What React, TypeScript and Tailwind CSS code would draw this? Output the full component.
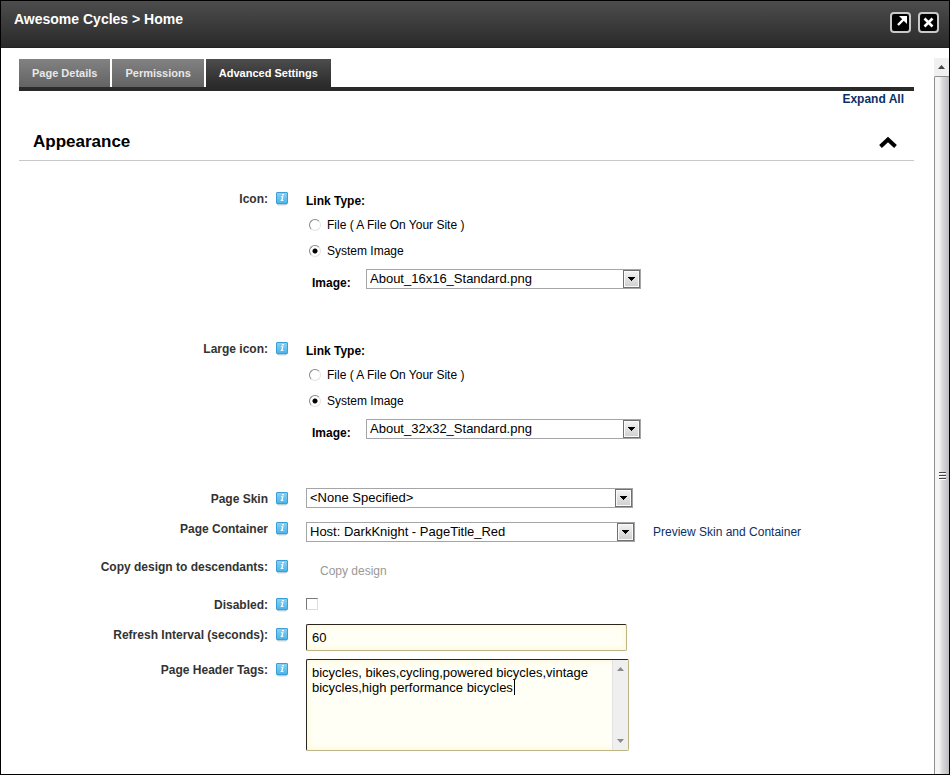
import { useState, type ReactNode, type SelectHTMLAttributes } from 'react';

function InfoIcon() {
  return (
    <svg width="12" height="14" viewBox="0 0 12 14" className="mt-1 block" aria-hidden="true">
      <defs>
        <linearGradient id="info-fill" x1="0" y1="0" x2="0" y2="1">
          <stop offset="0" stopColor="#8ad3f3" />
          <stop offset="1" stopColor="#49b4ea" />
        </linearGradient>
      </defs>
      <rect x="1" y="12" width="10" height="1" fill="#b9cdd8" />
      <rect x="2" y="13" width="8" height="1" fill="#e6edf1" />
      <rect x="0.5" y="0.5" width="11" height="11" rx="0.5" fill="url(#info-fill)" stroke="#3b9fd6" />
      <rect x="6" y="2" width="2" height="1.300" fill="#fff" />
      <path d="M5 4.300h2.500L6.600 8.300h.9v.8H4.500v-.8h.7L6 5.100H5z" fill="#fff" />
    </svg>
  );
}

function Row({
  label,
  htmlFor,
  className,
  contentClass = '',
  children,
}: {
  label: string;
  htmlFor?: string;
  className: string;
  contentClass?: string;
  children: ReactNode;
}) {
  return (
    <div className={`flex items-start ${className}`}>
      <label htmlFor={htmlFor} className="w-[249px] shrink-0 pt-[3px] text-right text-xs leading-4 font-bold text-[#333]">
        {label}
      </label>
      <div className="ml-2 w-[30px] shrink-0">
        <InfoIcon />
      </div>
      <div className={`min-w-0 flex-1 ${contentClass}`}>{children}</div>
    </div>
  );
}

function DropDown({ width, options, ...rest }: { width: string; options: string[] } & SelectHTMLAttributes<HTMLSelectElement>) {
  return (
    <div className={`relative h-5 ${width}`}>
      <select
        {...rest}
        className="block h-5 w-full appearance-none border border-[#a5a5a9] bg-white pr-5 pl-[3px] text-[13px] leading-[18px] text-black outline-none"
      >
        {options.map((o) => (
          <option key={o}>{o}</option>
        ))}
      </select>
      <span className="pointer-events-none absolute top-px right-px flex h-[18px] w-[17px] items-center justify-center border border-[#707070] bg-linear-to-b from-[#f3f3f3] to-[#cfcfcf] shadow-[inset_0_0_0_1px_#fafafa]">
        <svg width="7" height="4" viewBox="0 0 7 4" aria-hidden="true" shapeRendering="crispEdges">
          <path d="M0 0h7v1H6v1H5v1H4v1H3V3H2V2H1V1H0z" fill="#000" />
        </svg>
      </span>
    </div>
  );
}

function LinkPicker({ id, images }: { id: string; images: string[] }) {
  const [type, setType] = useState('system');
  const choices = [
    { value: 'file', text: 'File ( A File On Your Site )' },
    { value: 'system', text: 'System Image' },
  ];
  return (
    <fieldset className="text-xs text-black">
      <legend className="h-[21px] leading-5 font-bold">Link Type:</legend>
      {choices.map((c) => (
        <label key={c.value} className="flex h-[26px] items-center gap-[6px] pl-[3px]">
          <input
            type="radio"
            name={id}
            value={c.value}
            checked={type === c.value}
            onChange={() => setType(c.value)}
            className="size-3 shrink-0 appearance-none rounded-full border border-t-[#888] border-r-[#e4e4e4] border-b-[#e4e4e4] border-l-[#888] bg-white checked:bg-[radial-gradient(circle,#000_2px,transparent_3px)]"
          />
          {c.text}
        </label>
      ))}
      <div className="mt-[5px] flex pl-[6px]">
        <label htmlFor={`${id}-image`} className="w-[54px] pt-[6px] leading-4 font-bold">
          Image:
        </label>
        <DropDown id={`${id}-image`} width="w-[275px]" options={images} />
      </div>
    </fieldset>
  );
}

const headerButton =
  'flex size-[21px] items-center justify-center rounded-[4px] border-2 border-[#c9c9c9] bg-black';

const tabs = ['Page Details', 'Permissions', 'Advanced Settings'];

const field =
  'block w-full resize-none rounded-[2px] border border-t-[#2b2620] border-r-[#bdb583] border-b-[#bdb583] border-l-[#2b2620] bg-[#fffff5] px-[5px] text-black shadow-[inset_0_0_7px_#fbf3d0] outline-none';

export default function App() {
  const [active, setActive] = useState(2);
  const [interval, setIntervalValue] = useState('60');
  const [tags, setTags] = useState(
    'bicycles, bikes,cycling,powered bicycles,vintage bicycles,high performance bicycles',
  );

  return (
    <div className="flex min-h-screen flex-col border border-black bg-white font-['Liberation_Sans',Arial,sans-serif]">
      <header className="flex h-[47px] items-start justify-between border-b border-[#222] bg-linear-to-b from-[#4d4d4d] to-[#2a2a2a] pr-[10px] pl-[13px]">
        <h1 className="pt-2 text-sm leading-5 font-bold text-white">Awesome Cycles &gt; Home</h1>
        <div className="flex gap-[7px] pt-[11px]">
          <button type="button" aria-label="Open in full window" className={headerButton}>
            <svg width="17" height="17" viewBox="0 0 17 17" aria-hidden="true" className="shrink-0">
              <path d="M7 2h8v8l-2.800-2.800z" fill="#fff" />
              <path d="M12 5l-6 6" stroke="#fff" strokeWidth="2.400" />
            </svg>
          </button>
          <button type="button" aria-label="Close" className={headerButton}>
            <svg width="17" height="17" viewBox="0 0 17 17" fill="none" stroke="#fff" strokeWidth="2.600" aria-hidden="true" className="shrink-0">
              <path d="M4.500 4.500l8 8M12.500 4.500l-8 8" />
            </svg>
          </button>
        </div>
      </header>

      <div className="flex flex-1">
        <main className="min-w-0 flex-1 pt-[11px] pr-5 pl-[18px]">
          <nav className="flex gap-[2px] border-b-4 border-[#2a2a2a]">
            {tabs.map((t, i) => (
              <button
                key={t}
                type="button"
                onClick={() => setActive(i)}
                className={`h-7 px-[13px] text-[11px] font-bold ${
                  i === active
                    ? 'bg-linear-to-b from-[#4d4d4d] to-[#2a2a2a] text-white'
                    : 'bg-linear-to-b from-[#828282] to-[#636363] text-[#e8e8e8]'
                }`}
              >
                {t}
              </button>
            ))}
          </nav>

          <div className="flex justify-end pr-[10px]">
            <a href="#expand" className="text-xs leading-4 font-bold text-[#0d2f66]">
              Expand All
            </a>
          </div>

          <div className="mt-4 flex h-[38px] items-center justify-between border-b border-[#c8c8c8] pr-[17px] pl-[14px]">
            <h2 className="text-[17px] leading-6 font-bold text-black">Appearance</h2>
            <button type="button" aria-label="Collapse Appearance">
              <svg width="18" height="12" viewBox="0 0 18 12" fill="none" stroke="#000" strokeWidth="4" aria-hidden="true">
                <path d="M1.500 10.500L9 3.500l7.500 7" />
              </svg>
            </button>
          </div>

          <form className="pt-[27px]" onSubmit={(e) => e.preventDefault()}>
            <Row label="Icon:" htmlFor="icon-image" className="min-h-[150px]" contentClass="pt-[3px]">
              <LinkPicker id="icon" images={['About_16x16_Standard.png']} />
            </Row>
            <Row label="Large icon:" htmlFor="large-icon-image" className="min-h-[150px]" contentClass="pt-[3px]">
              <LinkPicker id="large-icon" images={['About_32x32_Standard.png']} />
            </Row>
            <Row label="Page Skin" htmlFor="skin" className="min-h-[30px]">
              <DropDown id="skin" width="w-[327px]" options={['<None Specified>']} />
            </Row>
            <Row label="Page Container" htmlFor="container" className="min-h-[38px]" contentClass="flex items-center gap-[18px] pt-1">
              <DropDown id="container" width="w-[329px]" options={['Host: DarkKnight - PageTitle_Red']} />
              <a href="#preview" className="text-xs leading-4 text-[#0d2f66]">
                Preview Skin and Container
              </a>
            </Row>
            <Row label="Copy design to descendants:" htmlFor="copy" className="min-h-[38px]" contentClass="pt-[7px]">
              <button id="copy" type="button" disabled className="block pl-[14px] text-xs leading-4 text-[#999]">
                Copy design
              </button>
            </Row>
            <Row label="Disabled:" htmlFor="disabled" className="min-h-[30px]" contentClass="pt-1">
              <input
                id="disabled"
                type="checkbox"
                className="block size-3 appearance-none border border-t-[#777] border-r-[#ddd] border-b-[#ddd] border-l-[#777] bg-white checked:bg-[#555]"
              />
            </Row>
            <Row label="Refresh Interval (seconds):" htmlFor="refresh" className="min-h-[35px]">
              <div className="w-[321px]">
                <input
                  id="refresh"
                  type="text"
                  value={interval}
                  onChange={(e) => setIntervalValue(e.target.value)}
                  className={`${field} h-[27px] text-[13px]`}
                />
              </div>
            </Row>
            <Row label="Page Header Tags:" htmlFor="tags" className="min-h-[92px]">
              <div className="relative w-[323px]">
                <textarea
                  id="tags"
                  value={tags}
                  onChange={(e) => setTags(e.target.value)}
                  className={`${field} h-[92px] overflow-hidden py-[5px] pr-5 text-[13px] leading-[15px]`}
                />
                <span className="absolute top-[21px] left-[208px] h-[15px] w-px bg-black" />
                <div className="absolute top-px right-px bottom-px flex w-4 flex-col items-center justify-between border-l border-[#e2e2e2] bg-[#efefef] py-[7px]">
                  <svg width="7" height="4" viewBox="0 0 7 4" fill="#8a8a8a" aria-hidden="true">
                    <path d="M3.500 0L7 4H0z" />
                  </svg>
                  <svg width="7" height="4" viewBox="0 0 7 4" fill="#8a8a8a" aria-hidden="true">
                    <path d="M3.500 4L7 0H0z" />
                  </svg>
                </div>
              </div>
            </Row>
          </form>
        </main>

        <div className="mt-[10px] flex w-[15px] shrink-0 flex-col bg-[#f0f0f0]" aria-hidden="true">
          <div className="flex h-[18px] items-center justify-center">
            <svg width="7" height="4" viewBox="0 0 7 4" fill="#444">
              <path d="M3.500 0L7 4H0z" />
            </svg>
          </div>
          <div className="flex flex-1 justify-center rounded-tl-[2px] border-t border-l border-[#8f8f8f] bg-linear-to-r from-[#f5f5f5] from-30% via-[#dcdcdc] via-50% to-[#bcbcc0] pt-[394px]">
            <svg width="7" height="9" viewBox="0 0 7 9" shapeRendering="crispEdges">
              <path d="M0 1h7v1H0zM0 4h7v1H0zM0 7h7v1H0z" fill="#444" />
              <path d="M0 2h7v1H0zM0 5h7v1H0zM0 8h7v1H0z" fill="#fff" />
            </svg>
          </div>
        </div>
      </div>
    </div>
  );
}
